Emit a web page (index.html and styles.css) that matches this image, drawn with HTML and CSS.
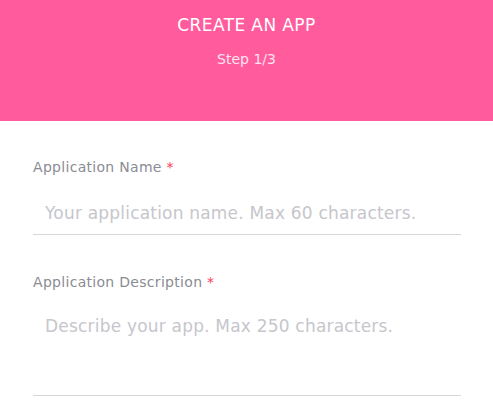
FILE: index.html
```html
<!DOCTYPE html>
<html>
<head>
<meta charset="utf-8">
<link rel="stylesheet" href="styles.css">
</head>
<body>
<header class="hero">
  <h1 class="hero-title">CREATE AN APP</h1>
  <p class="hero-step">Step 1/3</p>
</header>
<form class="form">
  <div class="field">
    <label class="field-label">Application Name <span class="req">*</span></label>
    <input class="field-input field-line" type="text" placeholder="Your application name. Max 60 characters.">
  </div>
  <div class="field">
    <label class="field-label">Application Description <span class="req">*</span></label>
    <textarea class="field-input field-area" placeholder="Describe your app. Max 250 characters."></textarea>
  </div>
</form>
</body>
</html>
```
FILE: styles.css
```css
html, body {
  margin: 0;
  padding: 0;
  background: #ffffff;
  font-family: "DejaVu Sans", "Open Sans", sans-serif;
}
.hero {
  background: #ff5b9d;
  height: 121px;
  box-sizing: border-box;
  padding-top: 14px;
  text-align: center;
  color: #ffffff;
}
.hero-title {
  margin: 0;
  font-size: 17px;
  font-weight: 400;
  line-height: 22px;
  letter-spacing: 0.4px;
}
.hero-step {
  margin: 13px 0 0;
  font-size: 14px;
  line-height: 20px;
  color: #ffe3ef;
}
.form {
  padding: 36px 32px 0 33px;
}
.field {
  display: flex;
  flex-direction: column;
  margin-bottom: 37px;
}
.field-label {
  font-size: 14px;
  line-height: 20px;
  color: #8a8c93;
  font-weight: 400;
  letter-spacing: 0.3px;
}
.req {
  color: #ff3a5a;
}
.field-input {
  margin-top: 22px;
  border: none;
  border-bottom: 1px solid #d7d7d7;
  padding: 0 12px 11px;
  font-family: inherit;
  font-size: 17px;
  line-height: 24px;
  letter-spacing: 0.2px;
  color: #555;
  outline: none;
  background: transparent;
}
.field-line {
  margin-top: 24px;
  padding-bottom: 9px;
}
.field-input::placeholder {
  color: #c6c6cc;
}
.field-area {
  height: 82px;
  resize: none;
  box-sizing: border-box;
  padding-top: 0;
}
```
